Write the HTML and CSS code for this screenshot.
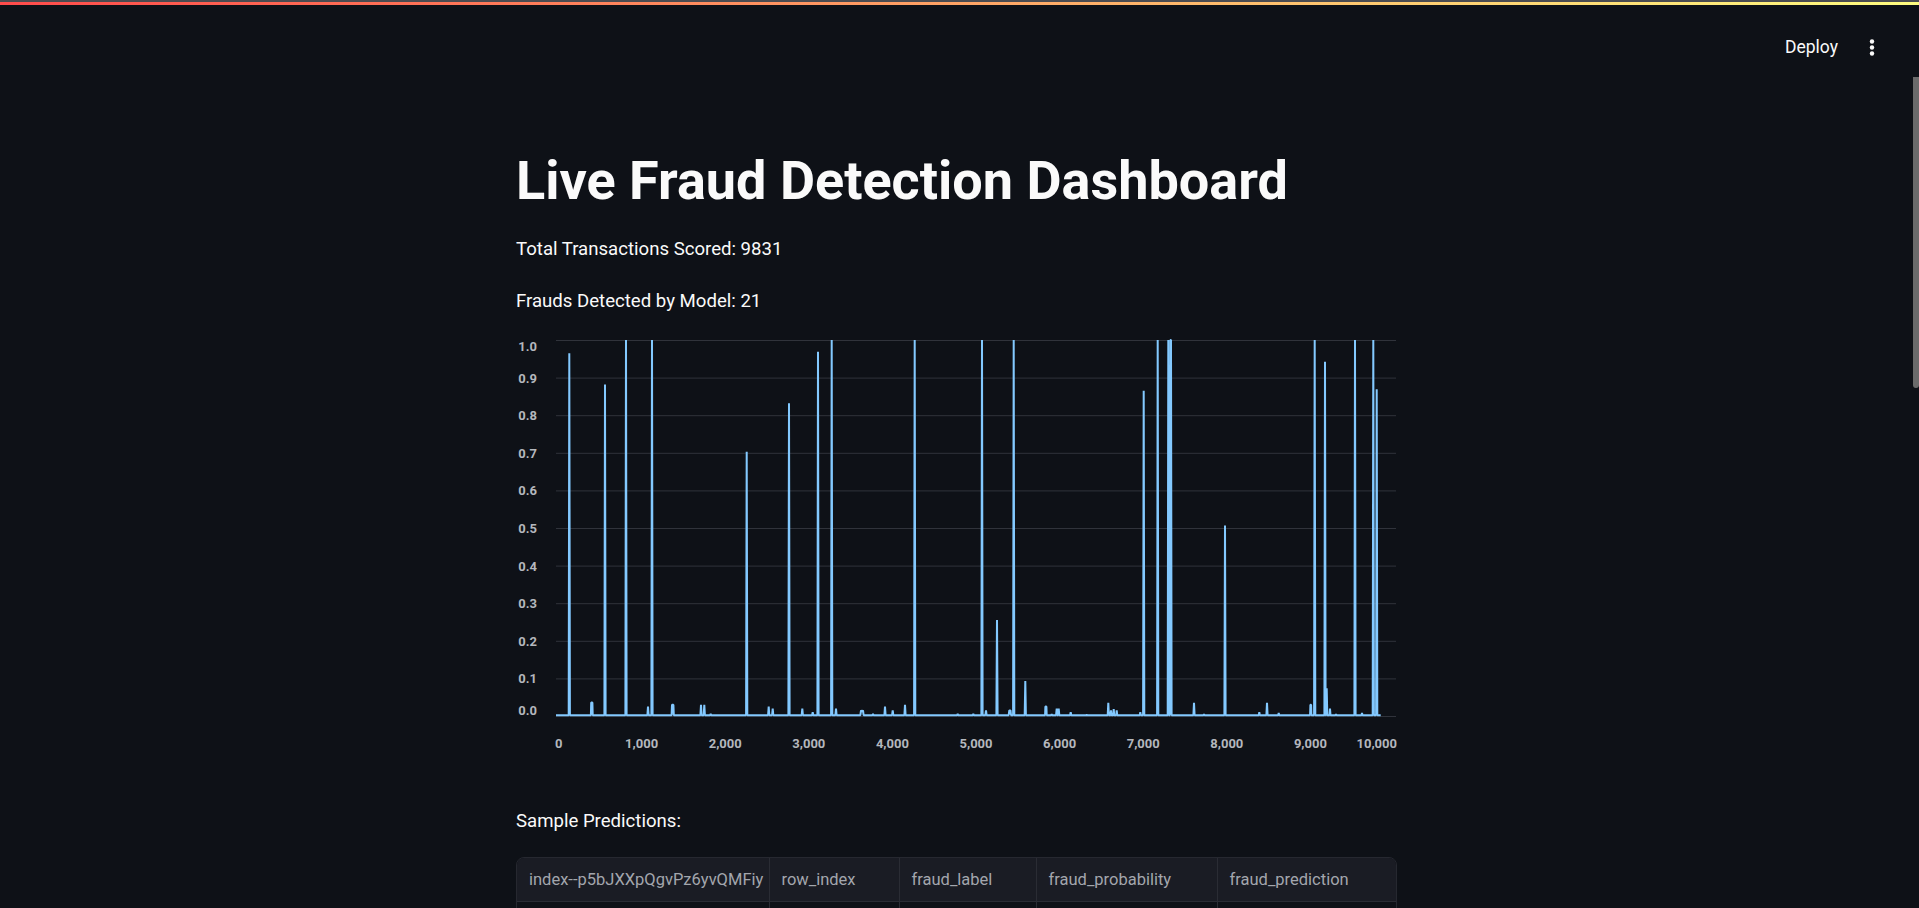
FILE: index.html
```html
<!DOCTYPE html>
<html lang="en">
<head>
<meta charset="utf-8">
<title>Live Fraud Detection Dashboard</title>
<link rel="stylesheet" href="styles.css">
</head>
<body>
<div class="decoration-shade"></div>
<div class="decoration"></div>
<div class="shell">
  <div class="app">
    <header class="toolbar">
      <span class="deploy">Deploy</span>
      <svg class="kebab" width="16" height="20" viewBox="0 0 16 20" aria-hidden="true">
        <circle cx="8" cy="4.5" r="2.2" fill="#fafafa"/>
        <circle cx="8" cy="10.5" r="2.2" fill="#fafafa"/>
        <circle cx="8" cy="16.5" r="2.2" fill="#fafafa"/>
      </svg>
    </header>
    <main class="main">
      <div class="block">
        <h1 class="title">Live Fraud Detection Dashboard</h1>
        <p class="text first">Total Transactions Scored: 9831</p>
        <p class="text second">Frauds Detected by Model: 21</p>
        <svg class="chart" width="881" height="425" viewBox="0 0 881 425">
          <defs>
            <clipPath id="plot"><rect x="38" y="9" width="844" height="380"/></clipPath>
          </defs>
          <g class="grid">
            <line x1="40" x2="880" y1="10.5" y2="10.5"/>
            <line x1="40" x2="880" y1="48.1" y2="48.1"/>
            <line x1="40" x2="880" y1="85.7" y2="85.7"/>
            <line x1="40" x2="880" y1="123.3" y2="123.3"/>
            <line x1="40" x2="880" y1="160.9" y2="160.9"/>
            <line x1="40" x2="880" y1="198.5" y2="198.5"/>
            <line x1="40" x2="880" y1="236.1" y2="236.1"/>
            <line x1="40" x2="880" y1="273.7" y2="273.7"/>
            <line x1="40" x2="880" y1="311.3" y2="311.3"/>
            <line x1="40" x2="880" y1="348.9" y2="348.9"/>
            <line x1="40" x2="880" y1="386.5" y2="386.5"/>
          </g>
          <g class="ylabels">
            <text x="21" y="20.5">1.0</text>
            <text x="21" y="52.6">0.9</text>
            <text x="21" y="90.2">0.8</text>
            <text x="21" y="127.8">0.7</text>
            <text x="21" y="165.4">0.6</text>
            <text x="21" y="203">0.5</text>
            <text x="21" y="240.6">0.4</text>
            <text x="21" y="278.2">0.3</text>
            <text x="21" y="315.8">0.2</text>
            <text x="21" y="353.4">0.1</text>
            <text x="21" y="384.5">0.0</text>
          </g>
          <g class="xlabels">
            <text x="39" y="418" class="start">0</text>
            <text x="125.6" y="418">1,000</text>
            <text x="209.2" y="418">2,000</text>
            <text x="292.8" y="418">3,000</text>
            <text x="376.4" y="418">4,000</text>
            <text x="460" y="418">5,000</text>
            <text x="543.6" y="418">6,000</text>
            <text x="627.2" y="418">7,000</text>
            <text x="710.8" y="418">8,000</text>
            <text x="794.4" y="418">9,000</text>
            <text x="881" y="418" class="end">10,000</text>
          </g>
          <path class="series" clip-path="url(#plot)" d="M40,385.2 L52.7,385.2 L53.3,23.2 L53.9,385.2 L74.9,385.2 L75.2,372.5 L76.4,372.5 L76.7,385.2 L88.4,385.2 L89,54.4 L89.6,385.2 L109.4,385.2 L110,10 L110.6,385.2 L131.4,385.2 L132,376.6 L132.6,385.2 L135.4,385.2 L136,10 L136.6,385.2 L155.6,385.2 L156,374.7 L157.4,374.7 L157.8,385.2 L184.4,385.2 L185,374.7 L185.6,385.2 L187.7,385.2 L188.3,374.7 L188.9,385.2 L194.2,385.2 L194.7,383.7 L195.2,385.2 L230.1,385.2 L230.7,121.7 L231.3,385.2 L252.1,385.2 L252.7,376.6 L253.3,385.2 L256.1,385.2 L256.7,378.5 L257.3,385.2 L272.4,385.2 L273,73.2 L273.6,385.2 L285.7,385.2 L286.3,378.5 L286.9,385.2 L296.1,385.2 L296.7,382.2 L297.3,385.2 L301.4,385.2 L302,21.7 L302.6,385.2 L315.1,385.2 L315.7,10 L316.3,385.2 L319.4,385.2 L320,378.5 L320.6,385.2 L344.4,385.2 L345,380.4 L346,381.5 L347,380.4 L347.6,385.2 L356.5,385.2 L357,383.9 L357.5,385.2 L368.4,385.2 L369,376.6 L369.6,385.2 L376.1,385.2 L376.7,380.4 L377.3,385.2 L388.4,385.2 L389,374.7 L389.6,385.2 L398.1,385.2 L398.7,10 L399.3,385.2 L441.2,385.2 L441.7,383.7 L442.2,385.2 L456.8,385.2 L457.3,383.7 L457.8,385.2 L465.4,385.2 L466,10 L466.6,385.2 L469.4,385.2 L470,380.4 L470.6,385.2 L480.4,385.2 L481,290.1 L481.6,385.2 L492.7,385.2 L493.3,380.4 L494.5,380.4 L495,385.2 L497.1,385.2 L497.7,10 L498.3,385.2 L508.7,385.2 L509.3,351 L509.9,385.2 L529.1,385.2 L529.4,376.6 L530.4,376.6 L530.7,385.2 L535.2,385.2 L535.7,384.1 L536.2,385.2 L540.1,385.2 L540.7,378.5 L541.3,385.2 L542.1,385.2 L542.7,378.5 L543.3,385.2 L554.1,385.2 L554.7,382.2 L555.3,385.2 L570.2,385.2 L570.7,384.9 L571.2,385.2 L591.7,385.2 L592.3,372.8 L592.9,385.2 L594.5,385.2 L595,380.4 L595.5,385.2 L597.2,385.2 L597.7,379.2 L598.2,385.2 L600.2,385.2 L600.7,380.4 L601.2,385.2 L623.8,385.2 L624.3,382.2 L624.8,385.2 L627.1,385.2 L627.7,60.8 L628.3,385.2 L641.1,385.2 L641.7,10 L642.3,385.2 L651.7,385.2 L652.3,10 L652.9,385.2 L653.8,385.2 L654.4,10 L655,10 L655.6,385.2 L677.4,385.2 L678,372.8 L678.6,385.2 L687.5,385.2 L688,384.1 L688.5,385.2 L708.4,385.2 L709,195.4 L709.6,385.2 L742.8,385.2 L743.3,382.2 L743.8,385.2 L750.4,385.2 L751,372.8 L751.6,385.2 L762.2,385.2 L762.7,383 L763.2,385.2 L794.1,385.2 L794.4,374.7 L795.1,374.7 L795.4,385.2 L798.1,385.2 L798.7,10 L799.3,385.2 L808.4,385.2 L809,31.8 L809.6,385.2 L810.1,385.2 L810.7,358.2 L811.3,385.2 L813.5,385.2 L814,378.5 L814.5,385.2 L819.5,385.2 L820,384.1 L820.5,385.2 L838.4,385.2 L839,10 L839.6,385.2 L845.5,385.2 L846,383 L846.5,385.2 L856.7,385.2 L857.3,10 L857.9,385.2 L860.1,385.2 L860.7,59.3 L861.3,385.2 L864.7,385.2"/>
        </svg>
        <p class="text caption">Sample Predictions:</p>
        <div class="table-wrap">
          <table class="grid-table">
            <colgroup>
              <col class="c1"><col class="c2"><col class="c3"><col class="c4"><col class="c5">
            </colgroup>
            <thead>
              <tr>
                <th>index--p5bJXXpQgvPz6yvQMFiy</th>
                <th>row_index</th>
                <th>fraud_label</th>
                <th>fraud_probability</th>
                <th>fraud_prediction</th>
              </tr>
            </thead>
            <tbody>
              <tr><td></td><td></td><td></td><td></td><td></td></tr>
            </tbody>
          </table>
        </div>
      </div>
    </main>
  </div>
  <div class="scrolltrack"><div class="thumb"></div></div>
</div>
</body>
</html>
```
FILE: styles.css
```css
html, body {
  margin: 0;
  padding: 0;
  height: 908px;
  overflow: hidden;
  background: #0e1117;
  color: #fafafa;
  font-family: Roboto, "Noto Sans", "Liberation Sans", sans-serif;
}

.decoration-shade {
  height: 2px;
  background: #4b4c51;
}

.decoration {
  height: 3px;
  background: linear-gradient(90deg, #ff4b4b, #fffd80);
}

.shell {
  display: flex;
  height: 903px;
}

.app {
  flex: 1;
  min-width: 0;
}

.toolbar {
  height: 70px;
  box-sizing: border-box;
  padding-top: 30px;
  padding-right: 33px;
  display: flex;
  justify-content: flex-end;
  align-items: flex-start;
}

.deploy {
  font-size: 17.5px;
  line-height: 24px;
  color: #fafafa;
  margin-right: 26px;
}

.kebab {
  display: block;
  margin-top: 2px;
}

.main {
  display: flex;
  justify-content: center;
  padding-top: 74px;
}

.block {
  width: 881px;
}

.title {
  margin: 0;
  font-size: 54px;
  line-height: 64px;
  font-weight: 700;
  color: #fafafa;
}

.text {
  margin: 0;
  font-size: 18.6px;
  line-height: 27px;
  color: #fafafa;
}

.text.first {
  margin-top: 23px;
}

.text.second {
  margin-top: 25px;
}

.chart {
  display: block;
  margin-top: 15px;
}

.grid line {
  stroke: #30333b;
  stroke-width: 1;
}

.ylabels text {
  font-family: Roboto, "Noto Sans", sans-serif;
  font-size: 13px;
  font-weight: 700;
  fill: #b4b7bd;
  text-anchor: end;
}

.xlabels text {
  font-family: Roboto, "Noto Sans", sans-serif;
  font-size: 13px;
  font-weight: 700;
  fill: #b4b7bd;
  text-anchor: middle;
}

.xlabels text.start {
  text-anchor: start;
}

.xlabels text.end {
  text-anchor: end;
}

.series {
  fill: none;
  stroke: #83c9ff;
  stroke-width: 2;
  stroke-linejoin: bevel;
}

.text.caption {
  margin-top: 53px;
}

.table-wrap {
  margin-top: 22px;
  border: 1px solid #262830;
  border-radius: 8px;
  overflow: hidden;
}

.grid-table {
  width: 100%;
  border-collapse: collapse;
  table-layout: fixed;
  font-size: 16.5px;
  color: #a3a6ad;
}

.c1 { width: 252px; }
.c2 { width: 130px; }
.c3 { width: 137px; }
.c4 { width: 181px; }
.c5 { width: auto; }

.grid-table th {
  background: #1a1c24;
  height: 43px;
  padding: 0 0 0 12px;
  text-align: left;
  font-weight: 400;
  border-right: 1px solid #2a2c34;
  border-bottom: 1px solid #2a2c34;
  white-space: nowrap;
  overflow: hidden;
}

.grid-table td {
  height: 36px;
  padding: 0 12px;
  border-right: 1px solid #2a2c34;
  border-bottom: 1px solid #2a2c34;
}

.grid-table th:last-child,
.grid-table td:last-child {
  border-right: none;
}

.scrolltrack {
  width: 6px;
}

.thumb {
  margin-top: 72px;
  height: 311px;
  background: #6b6b6b;
  border-radius: 0 0 3px 3px;
}
```
